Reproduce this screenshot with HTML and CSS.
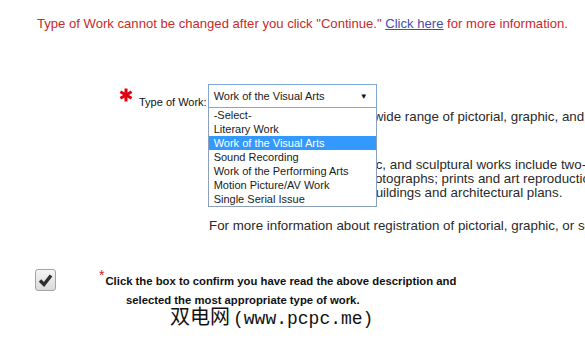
FILE: index.html
```html
<!DOCTYPE html>
<html>
    <head>
        <meta charset="utf-8">
        <title>Type of Work</title>
        <link rel="stylesheet" href="styles.css">
    </head>
    <body>
        <div id="notice">
            Type of Work cannot be changed after you click "Continue." <a href="#">Click here</a> for more information.
        </div>

        <div id="field">
            <svg class="req" width="14" height="14" viewBox="0 0 14 14">
                <g stroke="#e4000f" stroke-width="3" stroke-linecap="butt">
                    <line x1="7" y1="0.5" x2="7" y2="13.5"/>
                    <line x1="1.4" y1="3.8" x2="12.6" y2="10.2"/>
                    <line x1="1.4" y1="10.2" x2="12.6" y2="3.8"/>
                </g>
            </svg>
            <span class="label">Type of Work:</span>
            <div class="combo">
                <div class="current">
                    <span>Work of the Visual Arts</span>
                    <span class="arrow">&#9660;</span>
                </div>
                <ul class="options">
                    <li>-Select-</li>
                    <li>Literary Work</li>
                    <li class="on">Work of the Visual Arts</li>
                    <li>Sound Recording</li>
                    <li>Work of the Performing Arts</li>
                    <li>Motion Picture/AV Work</li>
                    <li>Single Serial Issue</li>
                </ul>
            </div>
        </div>

        <div id="desc">
            <p class="first">Visual Arts Works include a wide range of pictorial, graphic, and sculptural works.</p>
            <p class="second">
                <span>In particular, pictorial, graphic, and sculptural works include two-</span>
                <span>dimensional works of art, photographs; prints and art reproductions; maps, globes,</span>
                <span>globes, diagrams, models, buildings and architectural plans.</span>
            </p>
            <p class="third">For more information about registration of pictorial, graphic, or sculptural works, click here.</p>
        </div>

        <div id="confirm">
            <div class="box">
                <svg width="19" height="20" viewBox="0 0 19 20">
                    <path d="M4 10.5 L8 14.5 L15 5.5" fill="none" stroke="#2e2e2e" stroke-width="3.4" stroke-linejoin="miter"/>
                </svg>
            </div>
            <div class="text">
                <span class="star">*</span>Click the box to confirm you have read the above description and<br>
                selected the most appropriate type of work.
            </div>
        </div>

        <div id="mark"><span class="cjk">双电网</span><span class="latin">(www.pcpc.me)</span></div>
    </body>
</html>
```

FILE: styles.css
```css
body {
    margin: 0;
    padding: 0;
    background: #ffffff;
    color: #222222;
    font-family: "Liberation Sans", Arial, sans-serif;
    overflow: hidden;
}

#notice {
    padding: 16px 0 0 37px;
    font-size: 13.1px;
    line-height: 16px;
    color: #c8292c;
    white-space: nowrap;
}
#notice a {
    color: #4b4ba6;
    text-decoration: underline;
}

#field {
    display: flex;
    align-items: flex-start;
    margin: 52px 0 0 119px;
    height: 24px;
}
#field .req {
    margin-top: 4px;
}
#field .label {
    margin: 11px 1px 0 6px;
    font-size: 11px;
    line-height: 14px;
    color: #111111;
}
.combo {
    position: relative;
    width: 169px;
}
.combo .current {
    display: flex;
    justify-content: space-between;
    align-items: center;
    height: 22px;
    border: 1px solid #7ea7d8;
    padding: 0 8px 0 5px;
    font-size: 11px;
    color: #1a1a1a;
    background: #ffffff;
}
.combo .arrow {
    font-size: 8px;
    color: #111111;
}
.options {
    position: absolute;
    left: 0; top: 24px;
    width: 167px;
    margin: 0;
    padding: 0;
    list-style: none;
    border: 1px solid #8b9fbe;
    border-top: none;
    background: #ffffff;
    z-index: 10;
}
.options li {
    height: 14px;
    line-height: 14px;
    padding-left: 5px;
    font-size: 11px;
    color: #1a1a1a;
}
.options li.on {
    background: #3399ff;
    color: #ffffff;
}

#desc {
    margin-left: 209px;
    font-size: 13.33px;
    line-height: 14px;
    color: #2a2a2a;
    white-space: nowrap;
}
#desc p {
    margin: 0;
}
#desc .first {
    margin-top: 2px;
}
#desc .second {
    margin-top: 34px;
}
#desc .second span {
    display: block;
}
#desc .third {
    margin-top: 19px;
}

#confirm {
    display: flex;
    align-items: flex-start;
    margin: 36px 0 0 35px;
}
#confirm .box {
    width: 19px;
    height: 20px;
    border: 1px solid #a3a3a3;
    border-radius: 3px;
    background: linear-gradient(#f5f5f5, #dadada);
}
#confirm .box svg {
    display: block;
}
#confirm .text {
    margin: 2px 0 0 43px;
    font-size: 11.3px;
    font-weight: bold;
    line-height: 19px;
    color: #111111;
    text-indent: -27px;
    padding-left: 27px;
}
#confirm .star {
    color: #d0202a;
    font-weight: normal;
    font-size: 14px;
    position: relative;
    top: -5px;
    margin-right: 1px;
}

#mark {
    margin: -4px 0 0 170px;
    line-height: 20px;
    color: #111111;
    white-space: nowrap;
}
#mark .cjk {
    font-family: "Noto Sans CJK SC", sans-serif;
    font-size: 20px;
}
#mark .latin {
    margin-left: 3px;
    font-family: "Liberation Mono", monospace;
    font-size: 18px;
}
```
